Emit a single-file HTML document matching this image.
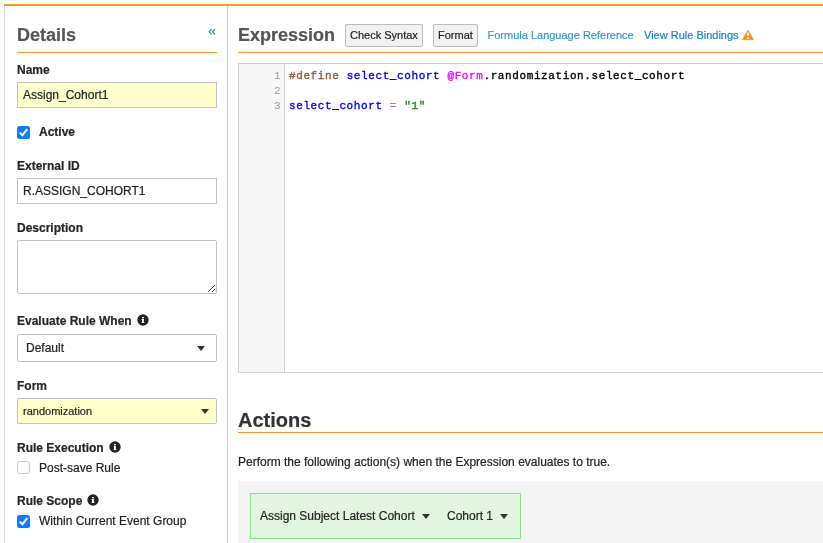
<!DOCTYPE html>
<html><head><meta charset="utf-8">
<style>
*{box-sizing:border-box;margin:0;padding:0}
html,body{width:823px;height:543px;overflow:hidden;background:#fff;font-family:"Liberation Sans",sans-serif;color:#333;-webkit-text-stroke:0.2px}
.a{position:absolute;white-space:pre;line-height:1}
.topbar{position:absolute;left:4px;top:4px;width:819px;height:2px;background:#f7982c}
.lpanel{position:absolute;left:4px;top:6px;width:1px;height:537px;background:#d6d6d6}
.rpanel{position:absolute;left:227px;top:6px;width:1px;height:537px;background:#d0d0d0}
.h1{font-size:18px;font-weight:bold;color:#555}
.hr{position:absolute;height:1px;background:#f7982c}
.lbl{font-size:12px;font-weight:bold;color:#262626}
.inp{position:absolute;left:17px;width:200px;border:1px solid #c2c2c2;background:#fff}
.yel{background:#ffffcc}
.txt{font-size:12px;color:#222}
.cb{position:absolute;left:17px;width:13px;height:13px;border-radius:2.5px}
.cbon{background:#0f7bfd}
.cboff{background:#fafafa;border:1px solid #c8c8c8}
.info{position:absolute;width:12px;height:12px}
.btn{position:absolute;top:24px;height:23px;border:1px solid #bdbdbd;border-radius:2px;background:#f1f1f1;font-size:11px;color:#222}
.tri{position:absolute;width:0;height:0;border-left:4.5px solid transparent;border-right:4.5px solid transparent;border-top:5px solid #333}
.code{font-family:"Liberation Mono",monospace;font-size:11px;letter-spacing:0.6px;font-weight:normal;-webkit-text-stroke:0.35px}
</style></head><body><div id="wrap" style="position:absolute;left:0;top:0;width:823px;height:543px;will-change:transform">
<div class="topbar"></div>
<div class="lpanel"></div>
<div class="rpanel"></div>

<!-- Left panel -->
<div class="a h1" style="left:17px;top:26px">Details</div>
<svg class="a" style="left:207px;top:27px" width="10" height="9" viewBox="0 0 10 9"><path d="M4.6 2.2 L2.2 4.8 L4.6 7.4 M7.9 2.2 L5.5 4.8 L7.9 7.4" fill="none" stroke="#1a8ad0" stroke-width="1.25"/></svg>
<div class="hr" style="left:17px;top:52px;width:200px"></div>

<div class="a lbl" style="left:17px;top:64px">Name</div>
<div class="inp yel" style="top:82px;height:26px"></div>
<div class="a txt" style="left:23px;top:89px">Assign_Cohort1</div>

<div class="cb cbon" style="top:126px"></div>
<svg class="a" style="left:17px;top:126px" width="13" height="13" viewBox="0 0 13 13"><path d="M2.7 6.6 L5.4 9.2 L10.3 3.1" fill="none" stroke="#fff" stroke-width="2"/></svg>
<div class="a lbl" style="left:39px;top:126px">Active</div>

<div class="a lbl" style="left:17px;top:160px">External ID</div>
<div class="inp" style="top:178px;height:26px"></div>
<div class="a txt" style="left:23px;top:185px">R.ASSIGN_COHORT1</div>

<div class="a lbl" style="left:17px;top:222px">Description</div>
<div class="inp" style="top:240px;height:54px;border-radius:2px"></div>
<svg class="a" style="left:206px;top:283px" width="10" height="10" viewBox="0 0 10 10"><path d="M2 9 L9 2 M6 9 L9 6" stroke="#555" stroke-width="1"/></svg>

<div class="a lbl" style="left:17px;top:315px">Evaluate Rule When</div>
<svg class="info" style="left:137px;top:314px" viewBox="0 0 12 12"><circle cx="6" cy="6" r="5.7" fill="#222"/><rect x="5" y="3" width="1.9" height="1.3" fill="#fff"/><path d="M4.5 5 H6.9 V8.3 H7.4 V9.1 H4.5 V8.3 H5 V5.8 H4.5 Z" fill="#fff"/></svg>
<div class="inp" style="top:334px;height:28px;border-radius:2px"></div>
<div class="a txt" style="left:26px;top:342px">Default</div>
<div class="tri" style="left:197px;top:346px"></div>

<div class="a lbl" style="left:17px;top:380px">Form</div>
<div class="inp yel" style="top:398px;height:26px;border-radius:2px"></div>
<div class="a" style="left:23px;top:406px;font-size:11px;color:#222">randomization</div>
<div class="tri" style="left:201px;top:409px"></div>

<div class="a lbl" style="left:17px;top:442px">Rule Execution</div>
<svg class="info" style="left:109px;top:441px" viewBox="0 0 12 12"><circle cx="6" cy="6" r="5.7" fill="#222"/><rect x="5" y="3" width="1.9" height="1.3" fill="#fff"/><path d="M4.5 5 H6.9 V8.3 H7.4 V9.1 H4.5 V8.3 H5 V5.8 H4.5 Z" fill="#fff"/></svg>
<div class="cb cboff" style="top:461px"></div>
<div class="a txt" style="left:39px;top:462px">Post-save Rule</div>

<div class="a lbl" style="left:17px;top:495px">Rule Scope</div>
<svg class="info" style="left:87px;top:494px" viewBox="0 0 12 12"><circle cx="6" cy="6" r="5.7" fill="#222"/><rect x="5" y="3" width="1.9" height="1.3" fill="#fff"/><path d="M4.5 5 H6.9 V8.3 H7.4 V9.1 H4.5 V8.3 H5 V5.8 H4.5 Z" fill="#fff"/></svg>
<div class="cb cbon" style="top:515px"></div>
<svg class="a" style="left:17px;top:515px" width="13" height="13" viewBox="0 0 13 13"><path d="M2.7 6.6 L5.4 9.2 L10.3 3.1" fill="none" stroke="#fff" stroke-width="2"/></svg>
<div class="a txt" style="left:39px;top:515px">Within Current Event Group</div>

<!-- Right panel -->
<div class="a h1" style="left:238px;top:26px">Expression</div>
<div class="btn" style="left:345px;width:78px"><span class="a" style="left:4px;top:5px">Check Syntax</span></div>
<div class="btn" style="left:433px;width:45px"><span class="a" style="left:4px;top:5px">Format</span></div>
<div class="a" style="left:487.5px;top:30px;font-size:11px;color:#3597cd">Formula Language Reference</div>
<div class="a" style="left:644px;top:30px;font-size:11px;color:#1984c4">View Rule Bindings</div>
<svg class="a" style="left:741px;top:29px" width="14" height="12" viewBox="0 0 14 12"><path d="M7 1.3 L12.6 10.7 H1.4 Z" fill="#f3921f" stroke="#f3921f" stroke-width="0.7" stroke-linejoin="round"/><rect x="6" y="3.8" width="2" height="2.8" fill="#fff"/><rect x="6" y="8.4" width="2" height="1.5" fill="#fff"/></svg>
<div class="hr" style="left:238px;top:52px;width:585px"></div>

<div style="position:absolute;left:238px;top:63px;width:600px;height:310px;border:1px solid #cfcfcf;background:#fff"></div>
<div style="position:absolute;left:239px;top:64px;width:46px;height:308px;background:#f7f7f7;border-right:1px solid #d4d4d4"></div>
<div class="a code" style="left:274px;top:71px;color:#999;-webkit-text-stroke:0">1</div>
<div class="a code" style="left:274px;top:86px;color:#999;-webkit-text-stroke:0">2</div>
<div class="a code" style="left:274px;top:101px;color:#999;-webkit-text-stroke:0">3</div>
<div class="a code" style="left:289px;top:71px;color:#000"><span style="color:#8a5a35">#define</span> <span style="color:#0000ff">select_cohort</span> <span style="color:#ff00ff">@Form</span>.randomization.select_cohort</div>
<div class="a code" style="left:289px;top:101px;color:#000"><span style="color:#0000ff">select_cohort</span> <span style="color:#b070f0">=</span> <span style="color:#1a8a1a">"1"</span></div>

<div class="a" style="left:238px;top:410px;font-size:20px;font-weight:bold;color:#333">Actions</div>
<div class="hr" style="left:238px;top:432px;width:585px"></div>
<div class="a txt" style="left:238px;top:456px">Perform the following action(s) when the Expression evaluates to true.</div>

<div style="position:absolute;left:238px;top:481px;width:585px;height:62px;background:#f3f3f3"></div>
<div style="position:absolute;left:250px;top:493px;width:271px;height:46px;background:#e2f5e0;border:1px solid #93db8d"></div>
<div class="a txt" style="left:260px;top:510px">Assign Subject Latest Cohort</div>
<div class="tri" style="left:422px;top:514px"></div>
<div class="a txt" style="left:447px;top:510px">Cohort 1</div>
<div class="tri" style="left:500px;top:514px"></div>
</div></body></html>
